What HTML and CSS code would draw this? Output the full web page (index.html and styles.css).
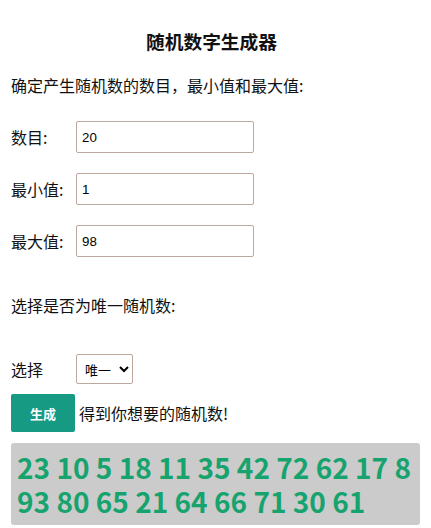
FILE: index.html
```html
<!DOCTYPE html>
<html lang="zh-CN">
<head>
    <meta charset="UTF-8">
    <meta name="viewport" content="width=device-width, initial-scale=1.0">
    <title>随机数字生成器</title>
    <link rel="stylesheet" href="styles.css">
</head>
<body>

    <div class="wrap">
        <h3 class="title">随机数字生成器</h3>
        <p class="intro">确定产生随机数的数目，最小值和最大值:</p>

        <div class="row">
            <label for="count">数目:</label>
            <input type="text" id="count" value="20">
        </div>
        <div class="row">
            <label for="min">最小值:</label>
            <input type="text" id="min" value="1">
        </div>
        <div class="row">
            <label for="max">最大值:</label>
            <input type="text" id="max" value="98">
        </div>

        <p class="intro unique">选择是否为唯一随机数:</p>

        <div class="row pick">
            <label for="unique">选择</label>
            <select id="unique">
                <option>唯一</option>
                <option>重复</option>
            </select>
        </div>

        <div class="action">
            <button class="gen">生成</button>
            <span>得到你想要的随机数!</span>
        </div>

        <div class="result">23 10 5 18 11 35 42 72 62 17 8 93 80 65 21 64 66 71 30 61</div>
    </div>

</body>
</html>
```

FILE: styles.css
```css
body {
    font-family: "Noto Sans CJK SC", "Noto Sans", sans-serif;
    font-size: 16px;
    color: #111;
    background-color: #fff;
    margin: 0;
}
.wrap {
    padding: 0 11px;
}
.title {
    font-size: 18.72px;
    font-weight: bold;
    text-align: center;
    margin: 28px 0 0;
    padding-right: 8px;
    line-height: 26px;
}
.intro {
    margin: 19px 0 0;
    line-height: 24px;
}
.row {
    display: flex;
    align-items: center;
    margin-top: 24px;
}
.row + .row {
    margin-top: 20px;
}
.row label {
    width: 65px;
}
.row input {
    width: 178px;
    height: 32px;
    box-sizing: border-box;
    border: 1px solid #bca89d;
    border-radius: 2px;
    padding: 0 5px;
    font-family: "Liberation Sans", Arial, sans-serif;
    font-size: 13.33px;
}
.unique {
    margin-top: 36px;
}
.pick {
    margin-top: 37px;
}
.pick select {
    width: 57px;
    height: 30px;
    border: 1px solid #bca89d;
    border-radius: 2px;
    background: #fff;
    font-family: "Noto Sans CJK SC", sans-serif;
    font-size: 13px;
    padding: 0 0 0 4px;
}
.action {
    display: flex;
    align-items: center;
    margin-top: 10px;
}
.gen {
    width: 64px;
    height: 38px;
    border: none;
    border-radius: 2px;
    background-color: #169a84;
    color: #fff;
    font-family: "Noto Sans CJK SC", sans-serif;
    font-size: 13px;
    font-weight: bold;
    margin-right: 4px;
}
.result {
    margin-top: 11px;
    background-color: #cbcbcb;
    border-radius: 3px;
    padding: 7px 6px;
    color: #17a36e;
    font-size: 28px;
    font-weight: bold;
    line-height: 34px;
}
```
